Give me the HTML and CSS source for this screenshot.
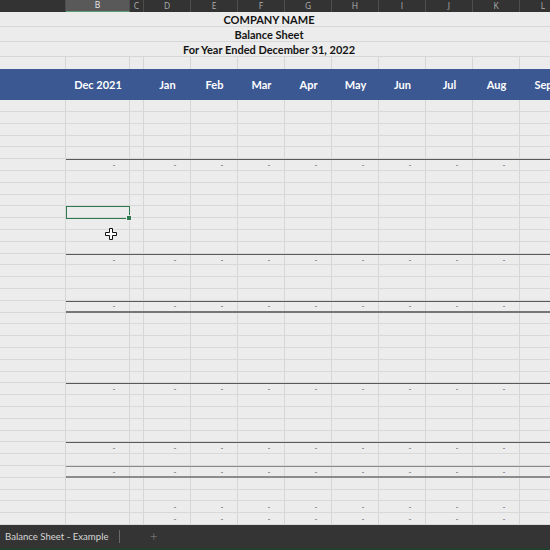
FILE: index.html
```html
<!DOCTYPE html>
<html>
<head>
<meta charset="utf-8">
<link rel="stylesheet" href="styles.css">
</head>
<body>
<div class="app">
  <div class="colhdr">
    <span></span><span class="on">B</span><span>C</span><span>D</span><span>E</span><span>F</span><span>G</span><span>H</span><span>I</span><span>J</span><span>K</span><span>L</span>
  </div>
  <div class="titles">
    <div class="trow">COMPANY NAME</div>
    <div class="trow">Balance Sheet</div>
    <div class="trow">For Year Ended December 31, 2022</div>
  </div>
  <div class="grid"><div class="row r4"></div></div>
  <div class="band">
    <span></span><span>Dec 2021</span><span></span><span>Jan</span><span>Feb</span><span>Mar</span><span>Apr</span><span>May</span><span>Jun</span><span>Jul</span><span>Aug</span><span>Sep</span>
  </div>
  <div class="grid body">
    <div class="row"></div>
    <div class="row"></div>
    <div class="row"></div>
    <div class="row"></div>
    <div class="row"></div>
    <div class="row tot"><i></i><i>-</i><i></i><i>-</i><i>-</i><i>-</i><i>-</i><i>-</i><i>-</i><i>-</i><i>-</i><i></i></div>
    <div class="row"></div>
    <div class="row"></div>
    <div class="row"></div>
    <div class="row"><i></i><i class="sel"></i></div>
    <div class="row"></div>
    <div class="row"></div>
    <div class="row"></div>
    <div class="row tot"><i></i><i>-</i><i></i><i>-</i><i>-</i><i>-</i><i>-</i><i>-</i><i>-</i><i>-</i><i>-</i><i></i></div>
    <div class="row"></div>
    <div class="row"></div>
    <div class="row"></div>
    <div class="row tot dbl"><i></i><i>-</i><i></i><i>-</i><i>-</i><i>-</i><i>-</i><i>-</i><i>-</i><i>-</i><i>-</i><i></i></div>
    <div class="row"></div>
    <div class="row"></div>
    <div class="row"></div>
    <div class="row"></div>
    <div class="row"></div>
    <div class="row"></div>
    <div class="row tot"><i></i><i>-</i><i></i><i>-</i><i>-</i><i>-</i><i>-</i><i>-</i><i>-</i><i>-</i><i>-</i><i></i></div>
    <div class="row"></div>
    <div class="row"></div>
    <div class="row"></div>
    <div class="row"></div>
    <div class="row tot"><i></i><i>-</i><i></i><i>-</i><i>-</i><i>-</i><i>-</i><i>-</i><i>-</i><i>-</i><i>-</i><i></i></div>
    <div class="row"></div>
    <div class="row tot light dbl"><i></i><i>-</i><i></i><i>-</i><i>-</i><i>-</i><i>-</i><i>-</i><i>-</i><i>-</i><i>-</i><i></i></div>
    <div class="row"></div>
    <div class="row"></div>
    <div class="row"><i></i><i></i><i></i><i>-</i><i>-</i><i>-</i><i>-</i><i>-</i><i>-</i><i>-</i><i>-</i><i></i></div>
    <div class="row"><i></i><i></i><i></i><i>-</i><i>-</i><i>-</i><i>-</i><i>-</i><i>-</i><i>-</i><i>-</i><i></i></div>
    <svg class="cursor" width="12" height="12" viewBox="0 0 12 12"><path d="M4.5 0.5 H7.5 V4.5 H11.5 V7.5 H7.5 V11.5 H4.5 V7.5 H0.5 V4.5 H4.5 Z" fill="#fff" stroke="#111" stroke-width="1"/></svg>
  </div>
  <div class="tabs">
    <span class="tab">Balance Sheet - Example</span>
    <span class="sep"></span>
    <span class="plus">+</span>
  </div>
</div>
</body>
</html>
```

FILE: styles.css
```css
html, body {
  margin: 0;
  padding: 0;
  background: #ececec;
  overflow: hidden;
}
.app {
  width: 550px;
  height: 550px;
  overflow: hidden;
  display: flex;
  flex-direction: column;
  font-family: Lato, "Open Sans", sans-serif;
  background: #ececec;
}
.colhdr, .band, .row {
  display: grid;
  grid-template-columns: 66px 64px 14px repeat(9, 47px);
  flex: none;
}
.colhdr {
  height: 12px;
  background: #333333;
  font-size: 8.5px;
  color: #b0b0b0;
  font-family: "Open Sans", sans-serif;
}
.colhdr span {
  border-right: 1px solid #4d4d4d;
  display: flex;
  align-items: center;
  justify-content: center;
  box-sizing: border-box;
  line-height: 1;
}
.colhdr span.on {
  background: #595959;
  color: #e8e8e8;
  border-bottom: 1.5px solid #5e9d72;
}
.titles {
  flex: none;
}
.trow {
  height: 15px;
  box-sizing: border-box;
  border-bottom: 1px solid #d7d7d7;
  padding-right: 12px;
  text-align: center;
  font-weight: 700;
  font-size: 11px;
  line-height: 15px;
  color: #141414;
}
.grid {
  flex: none;
  background-color: #ececec;
  background-image:
    linear-gradient(90deg, transparent 65px, #d6d6d6 65px, #d6d6d6 66px, transparent 66px),
    linear-gradient(90deg, transparent 129.5px, #d6d6d6 129.5px, #d6d6d6 130.5px, transparent 130.5px),
    linear-gradient(90deg, transparent 143.5px, #d6d6d6 143.5px, #d6d6d6 144.5px, transparent 144.5px),
    repeating-linear-gradient(90deg, transparent 0, transparent 46px, #d6d6d6 46px, #d6d6d6 47px);
  background-repeat: no-repeat;
  background-position: 0 0, 0 0, 0 0, 144px 0;
  background-size: 100% 100%, 100% 100%, 100% 100%, 420px 100%;
}
.body {
  position: relative;
}
.row {
  height: 11.8px;
  box-sizing: border-box;
  border-bottom: 1px solid #d8d8d8;
}
.r4 {
  height: 12.3px;
  border-bottom: none;
}
.row i {
  font-style: normal;
  font-size: 8px;
  line-height: 1;
  color: #555;
  display: flex;
  align-items: center;
  justify-content: flex-end;
  padding-right: 14.5px;
  box-sizing: border-box;
  min-width: 0;
}
.tot i:not(:first-child) {
  border-top: 1.5px solid #5a5a5a;
}
.tot.light i:not(:first-child) {
  border-top: 1.5px solid #888;
}
.dbl i:not(:first-child) {
  border-bottom: 2.5px solid #767676;
  margin-bottom: -1.5px;
}
.dbl.light i:not(:first-child) {
  border-bottom: 2.5px solid #8c8c8c;
}
.row i.sel {
  position: relative;
  border: 1.8px solid #2e7a4e;
  margin: -0.8px 0 -1.6px 0;
}
.row i.sel::after {
  content: "";
  position: absolute;
  right: -3px;
  bottom: -3px;
  width: 4px;
  height: 4px;
  background: #2e7a4e;
  border: 0.5px solid #ececec;
}
.band {
  height: 31px;
  background: #3b5893;
  color: #ffffff;
  font-weight: 700;
  font-size: 11px;
}
.band span {
  display: flex;
  align-items: center;
  justify-content: center;
  white-space: nowrap;
}
.cursor {
  position: absolute;
  left: 105px;
  top: 128px;
}
.tabs {
  flex: none;
  height: 25px;
  box-sizing: border-box;
  background: #343434;
  border-bottom: 2px solid #22402d;
  display: flex;
  align-items: center;
  font-family: Lato, "Open Sans", sans-serif;
  font-size: 9.6px;
  color: #d6d6d6;
}
.tab {
  padding-left: 5px;
  width: 119px;
  box-sizing: border-box;
  white-space: nowrap;
}
.sep {
  width: 1px;
  height: 13px;
  background: #6a6a6a;
}
.plus {
  margin-left: 30px;
  color: #8a8a8a;
  font-size: 13px;
  font-weight: 300;
}
```
